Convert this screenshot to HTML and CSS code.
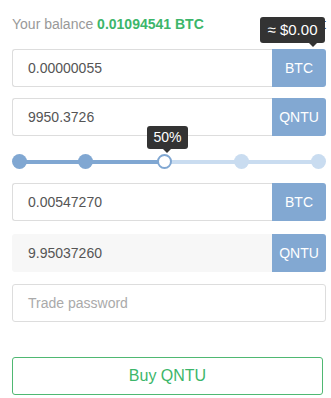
FILE: index.html
```html
<!DOCTYPE html>
<html>
    <head>
        <title>Buy QNTU</title>
        <link rel="stylesheet" href="styles.css">
    </head>
    <body>
        <div class="trade">
            <div class="balance">
                <span class="balance-label">Your balance <b class="balance-value">0.01094541 BTC</b></span>
                <a class="deposit">Deposit</a>
                <div class="tip tip-price">&asymp; $0.00</div>
            </div>

            <div class="field">
                <div class="field-input">0.00000055</div>
                <div class="field-unit">BTC</div>
            </div>

            <div class="field field-amount">
                <div class="field-input">9950.3726</div>
                <div class="field-unit">QNTU</div>
            </div>

            <div class="slider">
                <div class="track track-done"></div>
                <div class="track track-left"></div>
                <span class="mark mark-0"></span>
                <span class="mark mark-25"></span>
                <span class="mark mark-75 mark-off"></span>
                <span class="mark mark-100 mark-off"></span>
                <span class="handle"></span>
                <div class="tip tip-percent">50%</div>
            </div>

            <div class="field">
                <div class="field-input">0.00547270</div>
                <div class="field-unit">BTC</div>
            </div>

            <div class="field field-total">
                <div class="field-input">9.95037260</div>
                <div class="field-unit">QNTU</div>
            </div>

            <div class="field field-password">
                <div class="field-input placeholder">Trade password</div>
            </div>

            <button class="buy">Buy QNTU</button>
        </div>
    </body>
</html>
```

FILE: styles.css
```css
* {
    margin: 0;
    padding: 0;
    box-sizing: border-box;
}

body {
    font-family: 'Liberation Sans', Arial, sans-serif;
    font-size: 14px;
    color: #555;
    background: #fff;
}

.trade {
    padding: 0 5px 0 12px;
    display: flex;
    flex-direction: column;
}

.balance {
    position: relative;
    display: flex;
    justify-content: space-between;
    padding-top: 14px;
    line-height: 20px;
    height: 49px;
}
.balance-label {
    color: #999;
}
.balance-value {
    color: #3cb66a;
}
.deposit {
    color: #333;
}

.tip {
    position: absolute;
    background: #333;
    color: #fff;
    border-radius: 3px;
    text-align: center;
}
.tip::after {
    content: '';
    position: absolute;
    top: 100%;
    border: 4px solid transparent;
    border-top-color: #333;
}
.tip-price {
    right: 1px;
    top: 17px;
    width: 65px;
    height: 26px;
    line-height: 26px;
    font-size: 15px;
}
.tip-price::after {
    right: 8px;
}
.tip-percent {
    left: 135px;
    top: -10px;
    width: 41px;
    height: 23px;
    line-height: 23px;
    font-size: 14px;
}
.tip-percent::after {
    left: 16px;
}

.field {
    display: flex;
    height: 38px;
}
.field-input {
    flex: 1;
    display: flex;
    align-items: center;
    padding-left: 15px;
    border: 1px solid #ddd;
    border-right: none;
    border-radius: 3px 0 0 3px;
}
.field-unit {
    width: 54px;
    display: flex;
    align-items: center;
    justify-content: center;
    background: #82a8d2;
    color: #fff;
    border-radius: 0 3px 3px 0;
}
.field-amount {
    margin-top: 11px;
}
.field-total {
    margin-top: 13px;
}
.field-total .field-input {
    background: #f7f7f7;
    border-color: #f7f7f7;
}
.field-password {
    margin-top: 12px;
}
.field-password .field-input {
    border-right: 1px solid #ddd;
    border-radius: 3px;
}
.placeholder {
    color: #aaa;
}

.slider {
    position: relative;
    height: 47px;
}
.track {
    position: absolute;
    top: 24px;
    height: 4px;
}
.track-done {
    left: 7px;
    width: 146px;
    background: #80a7d2;
}
.track-left {
    left: 152px;
    width: 155px;
    background: #c9dcf0;
}
.mark,
.handle {
    position: absolute;
    top: 18px;
    width: 15px;
    height: 15px;
    border-radius: 50%;
    background: #80a7d2;
}
.mark-off {
    background: #c9dcf0;
}
.mark-0 { left: 0; }
.mark-25 { left: 66px; }
.mark-75 { left: 222px; }
.mark-100 { left: 299px; }
.handle {
    left: 145px;
    background: #fff;
    border: 2px solid #80a7d2;
}

.buy {
    margin: 35px 3px 0 0;
    height: 38px;
    border: 1px solid #4fb872;
    border-radius: 3px;
    background: #fff;
    color: #3cb66a;
    font-family: inherit;
    font-size: 16px;
}
```
